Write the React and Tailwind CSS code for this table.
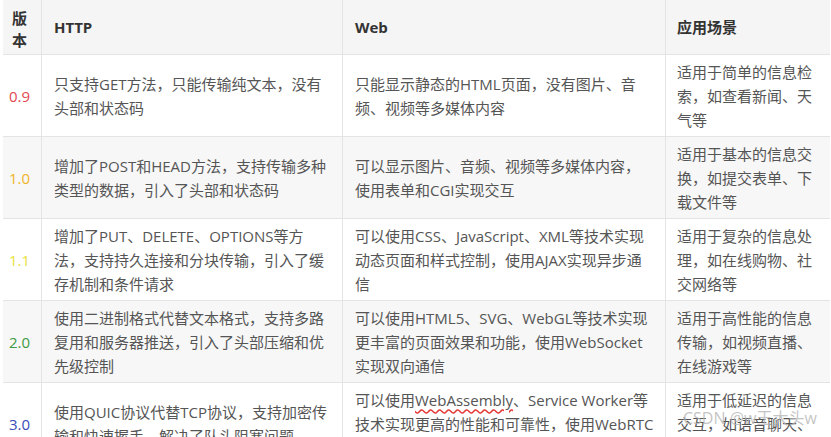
import React from 'react'

const rows = [
  {
    ver: '0.9',
    color: 'text-[#e2474f]',
    bg: 'bg-white',
    http: ['只支持GET方法，只能传输纯文本，没有', '头部和状态码'],
    web: ['只能显示静态的HTML页面，没有图片、音', '频、视频等多媒体内容'],
    use: ['适用于简单的信息检', '索，如查看新闻、天', '气等'],
  },
  {
    ver: '1.0',
    color: 'text-[#f0b429]',
    bg: 'bg-[#f7f7f7]',
    http: ['增加了POST和HEAD方法，支持传输多种', '类型的数据，引入了头部和状态码'],
    web: ['可以显示图片、音频、视频等多媒体内容，', '使用表单和CGI实现交互'],
    use: ['适用于基本的信息交', '换，如提交表单、下', '载文件等'],
  },
  {
    ver: '1.1',
    color: 'text-[#e6e23a]',
    bg: 'bg-white',
    http: ['增加了PUT、DELETE、OPTIONS等方', '法，支持持久连接和分块传输，引入了缓', '存机制和条件请求'],
    web: ['可以使用CSS、JavaScript、XML等技术实现', '动态页面和样式控制，使用AJAX实现异步通', '信'],
    use: ['适用于复杂的信息处', '理，如在线购物、社', '交网络等'],
  },
  {
    ver: '2.0',
    color: 'text-[#3f9a43]',
    bg: 'bg-[#f7f7f7]',
    http: ['使用二进制格式代替文本格式，支持多路', '复用和服务器推送，引入了头部压缩和优', '先级控制'],
    web: ['可以使用HTML5、SVG、WebGL等技术实现', '更丰富的页面效果和功能，使用WebSocket', '实现双向通信'],
    use: ['适用于高性能的信息', '传输，如视频直播、', '在线游戏等'],
  },
  {
    ver: '3.0',
    color: 'text-[#3b4db8]',
    bg: 'bg-white',
    http: ['使用QUIC协议代替TCP协议，支持加密传', '输和快速握手，解决了队头阻塞问题'],
    web: [
      <>
        可以使用<span className="underline decoration-wavy decoration-[#e53935] underline-offset-[3px]">WebAssembly</span>、Service Worker等
      </>,
      '技术实现更高的性能和可靠性，使用WebRTC',
      '实现实时通信',
    ],
    use: ['适用于低延迟的信息', '交互，如语音聊天、', '视频会议等'],
  },
]

function Lines({ lines }) {
  return (
    <div>
      {lines.map((l, i) => (
        <div key={i} className="whitespace-nowrap">{l}</div>
      ))}
    </div>
  )
}

export default function App() {
  return (
    <div
      className="relative w-[831px] h-[437px] overflow-hidden bg-white text-[15px] leading-[24px] text-[#555]"
      style={{ fontFamily: '"Open Sans", "Noto Sans CJK SC", sans-serif' }}
    >
      <div className="ml-[3px] w-[827px]">
        {/* header */}
        <div className="flex h-[55px] bg-[#f5f5f5] border-b border-[#e4e4e4] font-bold text-[#333]">
          <div className="w-[39px] shrink-0 border-r border-[#e4e4e4] flex items-center pl-[9px] pt-[4px] leading-[22px]">
            <div>版<br />本</div>
          </div>
          <div className="w-[301px] shrink-0 border-r border-[#e4e4e4] flex items-center pl-[12px]">HTTP</div>
          <div className="w-[323px] shrink-0 border-r border-[#e4e4e4] flex items-center pl-[12px]">Web</div>
          <div className="flex-1 flex items-center pl-[11px]">应用场景</div>
        </div>

        {rows.map((r) => (
          <div key={r.ver} className={`flex h-[82px] border-b border-[#e4e4e4] ${r.bg}`}>
            <div className={`w-[39px] shrink-0 border-r border-[#e4e4e4] flex items-center pl-[6px] ${r.color}`}>
              {r.ver}
            </div>
            <div className="w-[301px] shrink-0 border-r border-[#e4e4e4] flex items-center pl-[12px]">
              <Lines lines={r.http} />
            </div>
            <div className="w-[323px] shrink-0 border-r border-[#e4e4e4] flex items-center pl-[12px]">
              <Lines lines={r.web} />
            </div>
            <div className="flex-1 flex items-center pl-[11px]">
              <Lines lines={r.use} />
            </div>
          </div>
        ))}
      </div>

      {/* watermark */}
      <div className="absolute left-[683px] top-[406px] text-[16px] text-[#b5b5b5]/80 whitespace-nowrap">
        CSDN @w王大头w
      </div>
    </div>
  )
}
